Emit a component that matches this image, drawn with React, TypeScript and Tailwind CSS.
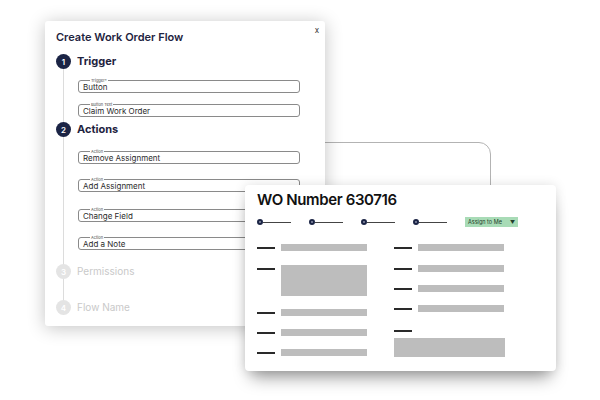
import React from "react";

const Field = ({ label, value, className = "" }: { label: string; value: string; className?: string }) => (
  <div
    className={`relative ml-[22px] flex h-[13px] w-[222px] items-center rounded-[3px] border border-[#8a8a8a] pl-[4px] text-[8px] leading-none text-[#2b2b2b] ${className}`}
  >
    <span className="absolute left-[11px] top-[-3px] bg-white px-[1px] text-[4px] leading-[5px] text-[#444]">
      {label}
    </span>
    {value}
  </div>
);

const Step = ({ n, title, active, className = "" }: { n: number; title: string; active: boolean; className?: string }) => (
  <div className={`relative z-10 flex h-[15px] items-center gap-[6px] ${className}`}>
    <div
      className={`flex h-[15px] w-[15px] items-center justify-center rounded-full text-[8px] font-semibold text-white ${
        active ? "bg-[#1b2445]" : "bg-[#e4e4e4]"
      }`}
    >
      {n}
    </div>
    <span
      className={
        active
          ? "text-[11px] font-bold text-[#1e2340]"
          : "text-[10px] font-normal text-[#c9c9c9]"
      }
    >
      {title}
    </span>
  </div>
);

const Bar = ({ className = "" }: { className?: string }) => (
  <div className={`flex items-start gap-[6px] ${className}`}>
    <div className="mt-[2.5px] h-[2px] w-[18px] bg-[#2a2a2a]" />
    <div className="h-[7px] w-[86px] bg-[#bdbdbd]" />
  </div>
);

const Progress = () => (
  <div className="flex w-[52px] items-center">
    <div className="h-[6px] w-[6px] rounded-full border-2 border-[#1b2445] bg-[#8b90a8]" />
    <div className="h-px w-[28px] bg-[#444]" />
  </div>
);

export default function App() {
  return (
    <div className="relative h-[400px] w-[600px] overflow-hidden bg-white font-['Inter',sans-serif]">
      {/* outline card behind */}
      <div className="absolute left-[200px] top-[142px] h-[110px] w-[291px] rounded-[12px] border border-[#b3b3b3]" />

      {/* Create Work Order Flow */}
      <div className="absolute left-[45px] top-[21px] h-[305px] w-[280px] rounded-[3px] bg-white pl-[11px] pt-[9px] shadow-[0_2px_18px_rgba(0,0,0,0.24)]">
        <span className="absolute right-[6px] top-[3px] text-[8px] text-[#333]">x</span>
        <h1 className="text-[11px] font-semibold leading-[14px] text-[#1e2340]">Create Work Order Flow</h1>

        <div className="relative mt-[10px]">
          <div className="absolute bottom-[8px] left-[7px] top-[8px] w-px bg-[#dcdcdc]" />
          <Step n={1} title="Trigger" active />
          <Field label="Trigger*" value="Button" className="mt-[11px]" />
          <Field label="Button Text" value="Claim Work Order" className="mt-[11px]" />
          <Step n={2} title="Actions" active className="mt-[5px]" />
          <Field label="Action" value="Remove Assignment" className="mt-[14px]" />
          <Field label="Action" value="Add Assignment" className="mt-[15px]" />
          <Field label="Action" value="Change Field" className="mt-[17px]" />
          <Field label="Action" value="Add a Note" className="mt-[15px]" />
          <Step n={3} title="Permissions" active={false} className="mt-[14px]" />
          <Step n={4} title="Flow Name" active={false} className="mt-[21px]" />
        </div>
      </div>

      {/* WO card */}
      <div className="absolute left-[245px] top-[185px] h-[186px] w-[311px] rounded-[4px] bg-white pl-[12px] pt-[6px] shadow-[0_12px_16px_-6px_rgba(0,0,0,0.4),0_0_12px_rgba(0,0,0,0.12)]">
        <h2 className="text-[15px] font-semibold leading-[18px] tracking-tight text-[#111]">WO Number 630716</h2>

        <div className="mt-[8px] flex h-[10px] items-center">
          <Progress />
          <Progress />
          <Progress />
          <Progress />
          <div className="flex h-[10px] w-[53px] items-center justify-between bg-[#a8dbb6] pl-[3px] pr-[3px] text-[5.5px] text-[#1f3d2a]">
            <span>Assign to Me</span>
            <span className="text-[5px] leading-none">▼</span>
          </div>
        </div>

        <div className="mt-[17px] flex">
          <div className="flex w-[137px] flex-col">
            <Bar />
            <div className="mt-[14px] flex items-start gap-[6px]">
              <div className="mt-[2.5px] h-[2px] w-[18px] bg-[#2a2a2a]" />
              <div className="h-[31px] w-[86px] bg-[#bdbdbd]" />
            </div>
            <Bar className="mt-[13px]" />
            <Bar className="mt-[13px]" />
            <Bar className="mt-[13px]" />
          </div>
          <div className="flex flex-col">
            <Bar />
            <Bar className="mt-[14px]" />
            <Bar className="mt-[13px]" />
            <Bar className="mt-[13px]" />
            <div className="mt-[18px] h-[2px] w-[18px] bg-[#2a2a2a]" />
            <div className="mt-[6px] h-[19px] w-[111px] bg-[#bdbdbd]" />
          </div>
        </div>
      </div>
    </div>
  );
}
